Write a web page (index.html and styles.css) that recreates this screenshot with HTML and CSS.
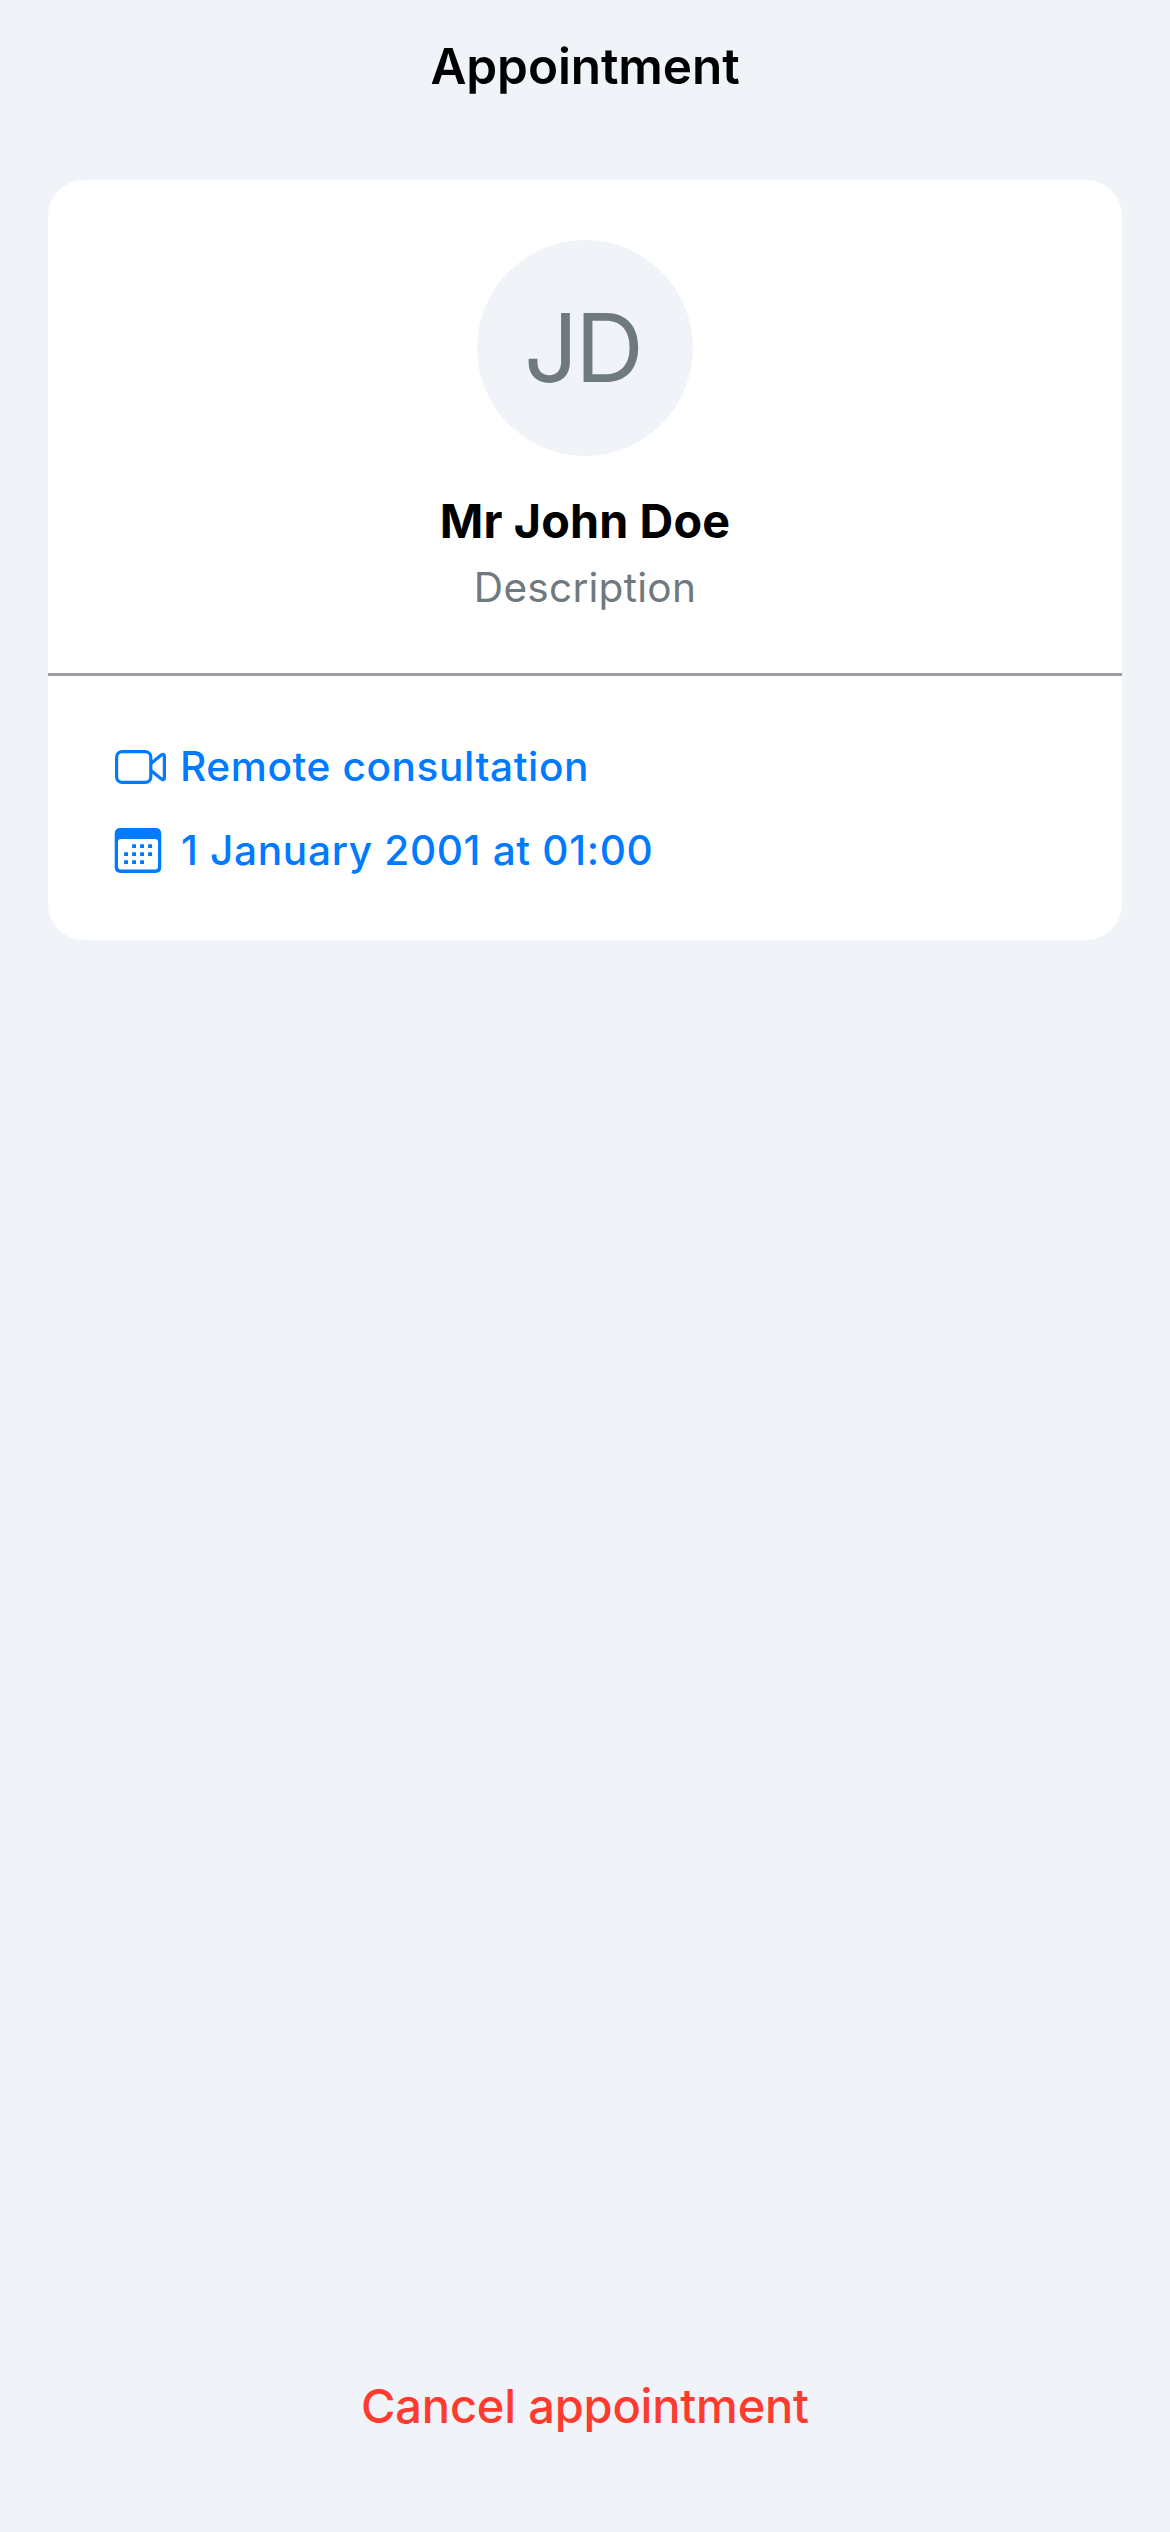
FILE: index.html
```html
<!DOCTYPE html>
<html lang="en">
<head>
  <meta charset="utf-8">
  <title>Appointment</title>
  <link rel="stylesheet" href="styles.css">
</head>
<body>
  <div class="screen">
    <header class="nav-bar">
      <h1 class="nav-title">Appointment</h1>
    </header>
    <main class="content">
      <section class="card">
        <div class="profile">
          <div class="avatar">JD</div>
          <h2 class="name">Mr John Doe</h2>
          <p class="description">Description</p>
        </div>
        <ul class="details">
          <li class="detail">
            <svg class="icon" viewBox="0 0 52 50" fill="none" stroke="currentColor" stroke-width="3.2" stroke-linejoin="round">
              <rect x="2.6" y="10.6" width="34.2" height="30.8" rx="5.6"/>
              <path d="M37.3 22.2 47 14.3Q50.4 12 50.4 15.6V36.4Q50.4 40 47 37.7L37.3 29.8"/>
            </svg>
            <span class="detail-text">Remote consultation</span>
          </li>
          <li class="detail">
            <svg class="icon" viewBox="0 0 52 50" fill="currentColor">
              <path fill-rule="evenodd" d="M6.6 3H41.4Q47.3 3 47.3 8.9V42.1Q47.3 48 41.4 48H6.6Q.7 48 .7 42.1V8.9Q.7 3 6.6 3ZM7 14Q4 14 4 17V41.4Q4 44.4 7 44.4H41Q44 44.4 44 41.4V17Q44 14 41 14Z"/>
              <path d="M18.1 19.2h3.9v3.9h-3.9zM26.1 19.2h3.9v3.9h-3.9zM34.1 19.2h3.9v3.9h-3.9zM10.1 27.2h3.9v3.9h-3.9zM18.1 27.2h3.9v3.9h-3.9zM26.1 27.2h3.9v3.9h-3.9zM34.1 27.2h3.9v3.9h-3.9zM10.1 35.2h3.9v3.9h-3.9zM18.1 35.2h3.9v3.9h-3.9zM26.1 35.2h3.9v3.9h-3.9z"/>
            </svg>
            <span class="detail-text date">1 January 2001 at 01:00</span>
          </li>
        </ul>
      </section>
    </main>
    <footer class="actions">
      <button class="cancel" type="button">Cancel appointment</button>
    </footer>
  </div>
</body>
</html>
```
FILE: styles.css
```css
* {
  box-sizing: border-box;
  margin: 0;
  padding: 0;
}

body {
  background: #f0f4f9;
  color: #000;
  font-family: Inter, "Liberation Sans", sans-serif;
}

.screen {
  display: flex;
  flex-direction: column;
  min-height: 2532px;
}

.nav-bar {
  height: 132px;
  text-align: center;
}

.nav-title {
  font-size: 49.5px;
  font-weight: 600;
  letter-spacing: -0.1px;
  line-height: 132px;
}

.content {
  flex: 1;
  padding: 48px 48px 0;
}

.card {
  background: #fff;
  border-radius: 36px;
  overflow: hidden;
}

.profile {
  display: flex;
  flex-direction: column;
  align-items: center;
  padding: 60px 0;
  border-bottom: 3px solid #9b9fa3;
}

.avatar {
  width: 216px;
  height: 216px;
  padding-right: 5px;
  border-radius: 50%;
  background: #f0f4f9;
  color: #6f7980;
  font-size: 95px;
  letter-spacing: -3px;
  line-height: 215px;
  text-align: center;
}

.name {
  margin-top: 36px;
  font-size: 46.7px;
  font-weight: 700;
  letter-spacing: 0.15px;
  line-height: 58px;
}

.description {
  margin-top: 13px;
  color: #6f7980;
  font-size: 40.6px;
  letter-spacing: 0.25px;
  line-height: 50px;
}

.details {
  display: flex;
  flex-direction: column;
  gap: 34px;
  padding: 65px 66px;
  list-style: none;
}

.detail {
  display: flex;
  align-items: center;
  height: 50px;
  gap: 14px;
  color: #007aff;
}

.icon {
  width: 52px;
  height: 50px;
}

.detail-text {
  padding-top: 2px;
  font-size: 40.6px;
  font-weight: 500;
  letter-spacing: 0.6px;
  line-height: 50px;
}

.date {
  padding-left: 1px;
  letter-spacing: 0.68px;
}

.actions {
  padding-bottom: 86px;
  text-align: center;
}

.cancel {
  border: 0;
  background: none;
  color: #ff3b30;
  font: 500 47px/80px Inter, "Liberation Sans", sans-serif;
  letter-spacing: -0.2px;
}
```
